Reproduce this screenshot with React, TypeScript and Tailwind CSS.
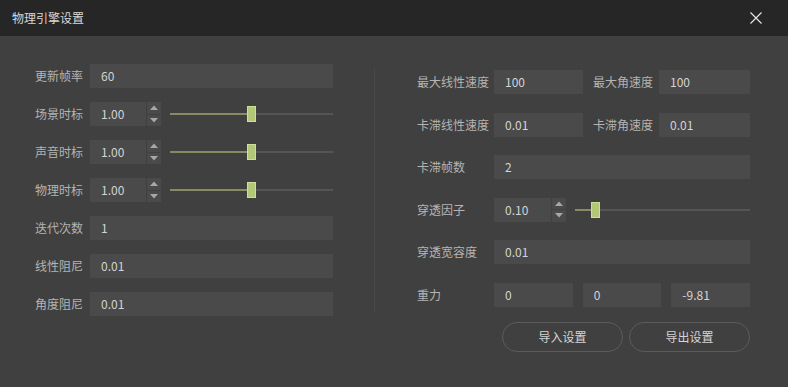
import React from "react";

const font = { fontFamily: '"Noto Sans CJK SC", "Microsoft YaHei", sans-serif' };

function Field({ value, className = "" }: { value: string; className?: string }) {
  return (
    <div
      className={`flex h-6 items-center bg-[#4a4a4a] pl-[11px] text-[12px] text-[#d4d4d4] ${className}`}
    >
      {value}
    </div>
  );
}

function Spin() {
  return (
    <div className="ml-px flex h-6 w-[14px] flex-col gap-px">
      <div className="flex flex-1 items-center justify-center bg-[#4a4a4a]">
        <svg width="8" height="5" viewBox="0 0 8 5">
          <path d="M0 5L4 0.5L8 5Z" fill="#a8a8a8" />
        </svg>
      </div>
      <div className="flex flex-1 items-center justify-center bg-[#4a4a4a]">
        <svg width="8" height="5" viewBox="0 0 8 5">
          <path d="M0 0L4 4.5L8 0Z" fill="#a8a8a8" />
        </svg>
      </div>
    </div>
  );
}

function Slider({ pos }: { pos: number }) {
  return (
    <div className="relative ml-[9px] flex h-6 flex-1 items-center">
      <div className="h-[2px] bg-[#8a8a62]" style={{ width: `${pos}%` }} />
      <div className="h-[2px] flex-1 bg-[#555555]" />
      <div
        className="absolute top-1 h-4 w-[9px] border border-[#cfe096] bg-[#b3c778]"
        style={{ left: `${pos}%` }}
      />
    </div>
  );
}

function LeftRow({ label, children }: { label: string; children: React.ReactNode }) {
  return (
    <div className="flex h-6 items-center">
      <span className="w-[55px] text-[12px] text-[#b4b4b4]">{label}</span>
      <div className="flex flex-1 items-center">{children}</div>
    </div>
  );
}

function RightRow({ label, children }: { label: string; children: React.ReactNode }) {
  return (
    <div className="flex h-6 items-center">
      <span className="w-[77px] text-[12px] text-[#b4b4b4]">{label}</span>
      <div className="flex flex-1 items-center">{children}</div>
    </div>
  );
}

export default function App() {
  return (
    <div className="h-[387px] w-[788px] overflow-hidden bg-[#404040]" style={font}>
      <div className="flex h-9 items-center justify-between bg-[#262626] pl-3 pr-[26px]">
        <span className="text-[12px] text-[#d8d8d8]">物理引擎设置</span>
        <svg width="12" height="12" viewBox="0 0 12 12">
          <path d="M0.5 0.5L11.5 11.5M11.5 0.5L0.5 11.5" stroke="#e8e8e8" strokeWidth="1.1" />
        </svg>
      </div>

      <div className="flex pl-[35px]">
        <div className="mt-7 flex w-[298px] flex-col gap-[14px]">
          <LeftRow label="更新帧率">
            <Field value="60" className="flex-1" />
          </LeftRow>
          <LeftRow label="场景时标">
            <Field value="1.00" className="w-[56px]" />
            <Spin />
            <Slider pos={47} />
          </LeftRow>
          <LeftRow label="声音时标">
            <Field value="1.00" className="w-[56px]" />
            <Spin />
            <Slider pos={47} />
          </LeftRow>
          <LeftRow label="物理时标">
            <Field value="1.00" className="w-[56px]" />
            <Spin />
            <Slider pos={47} />
          </LeftRow>
          <LeftRow label="迭代次数">
            <Field value="1" className="flex-1" />
          </LeftRow>
          <LeftRow label="线性阻尼">
            <Field value="0.01" className="flex-1" />
          </LeftRow>
          <LeftRow label="角度阻尼">
            <Field value="0.01" className="flex-1" />
          </LeftRow>
        </div>

        <div className="ml-[41px] mt-8 h-[244px] w-px bg-[#4a4a4a]" />

        <div className="ml-[42px] mt-[34px] flex w-[333px] flex-col">
          <div className="flex flex-col gap-[18.5px]">
            <RightRow label="最大线性速度">
              <Field value="100" className="w-[89px] pl-3" />
              <span className="ml-[10px] w-[66px] text-[12px] text-[#b4b4b4]">最大角速度</span>
              <Field value="100" className="flex-1 pl-3" />
            </RightRow>
            <RightRow label="卡滞线性速度">
              <Field value="0.01" className="w-[89px] pl-3" />
              <span className="ml-[10px] w-[66px] text-[12px] text-[#b4b4b4]">卡滞角速度</span>
              <Field value="0.01" className="flex-1 pl-3" />
            </RightRow>
            <RightRow label="卡滞帧数">
              <Field value="2" className="flex-1 pl-3" />
            </RightRow>
            <RightRow label="穿透因子">
              <Field value="0.10" className="w-[57px] pl-3" />
              <Spin />
              <Slider pos={9} />
            </RightRow>
            <RightRow label="穿透宽容度">
              <Field value="0.01" className="flex-1 pl-3" />
            </RightRow>
            <RightRow label="重力">
              <div className="grid flex-1 grid-cols-3 gap-[10px]">
                <Field value="0" className="pl-3" />
                <Field value="0" className="pl-3" />
                <Field value="-9.81" className="pl-3" />
              </div>
            </RightRow>
          </div>
          <div className="mt-[15px] flex justify-end gap-[6px]">
            <button className="h-[30px] w-[121px] rounded-full border border-[#5c5c5c] text-[12px] text-[#d4d4d4]">
              导入设置
            </button>
            <button className="h-[30px] w-[121px] rounded-full border border-[#5c5c5c] text-[12px] text-[#d4d4d4]">
              导出设置
            </button>
          </div>
        </div>
      </div>
    </div>
  );
}
